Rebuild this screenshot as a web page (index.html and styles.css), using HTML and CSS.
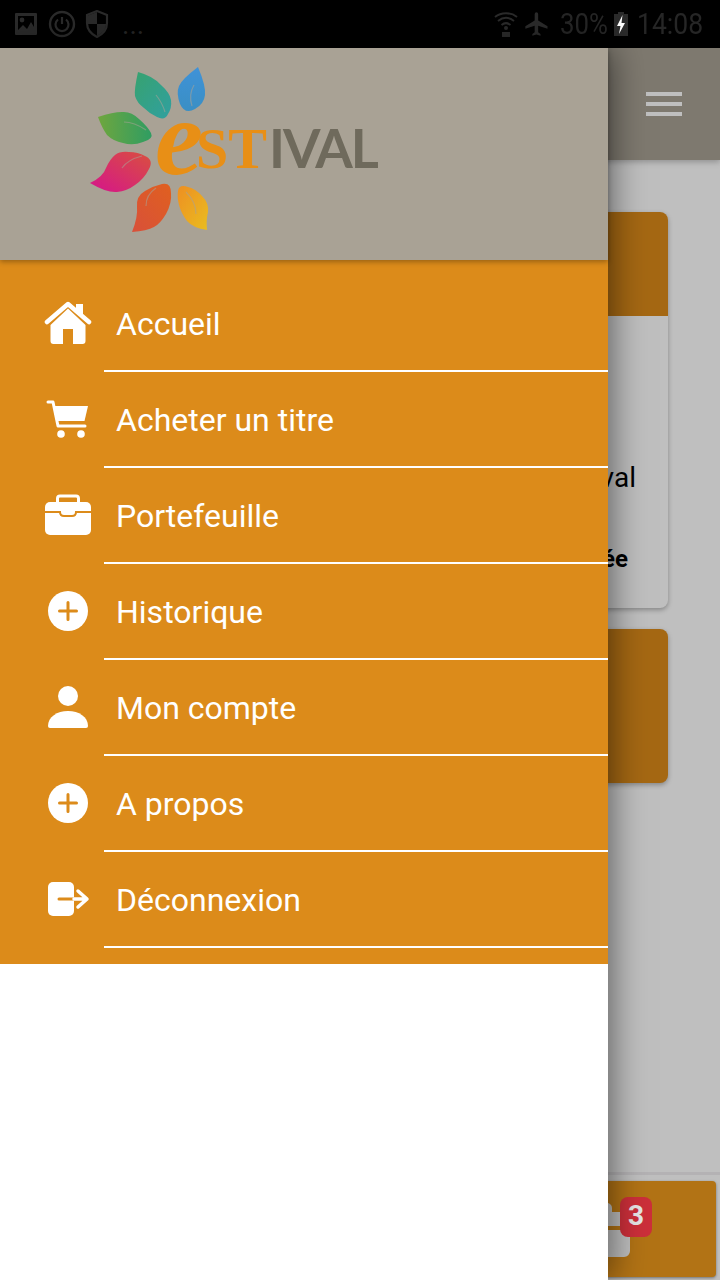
FILE: index.html
```html
<!DOCTYPE html>
<html lang="fr">
<head>
<meta charset="utf-8">
<title>Estival</title>
<link rel="stylesheet" href="styles.css">
</head>
<body>
<div class="screen">
  <header class="status">
    <div class="status-group">
      <svg class="st-icon" width="26" height="26" viewBox="0 0 26 26"><path d="M3 2h20a1 1 0 0 1 1 1v20a1 1 0 0 1-1 1H3a1 1 0 0 1-1-1V3a1 1 0 0 1 1-1zm2 3v14l5-5 4 4 4-7 3 5V5z" fill-rule="evenodd"/><circle cx="9" cy="9" r="2.4"/></svg>
      <svg class="st-icon" width="28" height="28" viewBox="0 0 28 28"><circle cx="14" cy="14" r="12" fill="none" stroke="#2b2b2b" stroke-width="2.4"/><path d="M10 9.5a6.5 6.5 0 1 0 8 0" fill="none" stroke="#2b2b2b" stroke-width="2.2"/><path d="M14 7v7" stroke="#2b2b2b" stroke-width="2.2"/></svg>
      <svg class="st-icon" width="24" height="28" viewBox="0 0 24 28"><path d="M12 1l10 4v8c0 7-4 11-10 14C6 24 2 20 2 13V5z" fill="none" stroke="#2b2b2b" stroke-width="2.2"/><path d="M12 2L3 5.500V14h9zM12 14v12c5-3 9-6 9-12z"/></svg>
      <span class="st-dots">...</span>
    </div>
    <div class="status-group status-right">
      <svg class="st-icon" width="24" height="28" viewBox="0 0 24 28"><g fill="none" stroke="#2b2b2b" stroke-width="2"><path d="M1 7c6-5 16-5 22 0"/><path d="M4 11c5-4 11-4 16 0"/><path d="M7.500 15c3-2.500 6-2.500 9 0"/></g><circle cx="12" cy="18" r="2"/><path d="M8 22h8v5H8z"/></svg>
      <svg class="st-icon st-plane" width="28" height="28" viewBox="0 0 24 24"><path d="M21 16v-2l-8-5V3.500a1.500 1.500 0 0 0-3 0V9l-8 5v2l8-2.500V19l-2 1.500V22l3.500-1 3.500 1v-1.500L13 19v-5.500z"/></svg>
      <span class="st-pct">30%</span>
      <svg class="st-batt" width="16" height="24" viewBox="0 0 16 24"><path d="M5 0h6v2h4v22H1V2h4z" fill="#2b2b2b"/><path d="M9.500 3L4 14h3.500L6 22l6-11H8.500z" fill="#fff"/></svg>
      <span class="st-time">14:08</span>
    </div>
  </header>

  <div class="main">
    <div class="appbar">
      <button class="burger" type="button" aria-label="Menu"><span></span><span></span><span></span></button>
    </div>
    <div class="content">
      <article class="card">
        <div class="card-head"></div>
        <div class="card-body">
          <p class="card-text">Bienvenue sur l'application Estival</p>
          <p class="card-status">Validée</p>
        </div>
      </article>
      <div class="card-second"></div>
    </div>
    <footer class="footer">
      <div class="cart-button">
        <div class="bag">
          <svg width="60" height="54" viewBox="0 0 60 54"><path d="M20 10V5a3 3 0 0 1 3-3h14a3 3 0 0 1 3 3v5" fill="none" stroke="#fff" stroke-width="4"/><path d="M6 9h48a6 6 0 0 1 6 6v8H0v-8a6 6 0 0 1 6-6zM0 27h60v21a6 6 0 0 1-6 6H6a6 6 0 0 1-6-6z" fill="#fff"/></svg>
          <span class="badge">3</span>
        </div>
      </div>
    </footer>
    <div class="scrim"></div>

    <nav class="drawer">
      <div class="drawer-head">
        <svg class="logo" width="300" height="180" viewBox="80 60 300 180">
          <defs>
            <linearGradient id="gTeal" x1="0" y1="0" x2="1" y2="1"><stop offset="0" stop-color="#37a26f"/><stop offset="1" stop-color="#30a0a0"/></linearGradient>
            <linearGradient id="gBlue" x1="0" y1="0" x2="0" y2="1"><stop offset="0" stop-color="#3f92d8"/><stop offset="1" stop-color="#3a8fc4"/></linearGradient>
            <linearGradient id="gGreen" x1="0" y1="0" x2="1" y2="0"><stop offset="0" stop-color="#6fa63e"/><stop offset="1" stop-color="#2f9d62"/></linearGradient>
            <linearGradient id="gPink" x1="0" y1="1" x2="1" y2="0"><stop offset="0" stop-color="#d5148c"/><stop offset="1" stop-color="#d9503e"/></linearGradient>
            <linearGradient id="gRed" x1="0" y1="1" x2="1" y2="0"><stop offset="0" stop-color="#d8503a"/><stop offset="1" stop-color="#e0601f"/></linearGradient>
            <linearGradient id="gYellow" x1="0" y1="0" x2="1" y2="1"><stop offset="0" stop-color="#ee8f22"/><stop offset="1" stop-color="#e9bd20"/></linearGradient>
          </defs>
          <g class="logo-art">
            <path d="M138 72Q153 76 161 85Q170 93 171 100Q172 108 168 114Q165 121 157 117Q150 114 144 108Q137 103 135 96Q134 90 138 72Z" fill="url(#gTeal)"/>
            <path d="M198 67Q206 86 205 95Q204 104 195 109Q185 115 180 104Q176 93 179 86Q182 79 198 67Z" fill="url(#gBlue)"/>
            <path d="M98 117Q113 112 122 112Q131 111 139 119Q148 127 151 133Q154 139 143 142Q133 146 123 143Q113 141 107 135Q102 128 98 117Z" fill="url(#gGreen)"/>
            <path d="M90 183Q103 177 106 168Q110 159 115 155Q120 151 129 152Q138 152 145 156Q154 160 149 169Q144 179 135 185Q127 191 117 192Q107 193 90 183Z" fill="url(#gPink)"/>
            <path d="M132 232Q138 217 137 207Q136 196 145 191Q153 186 162 184Q171 182 171 193Q172 203 166 214Q160 224 154 227Q147 231 132 232Z" fill="url(#gRed)"/>
            <path d="M207 230Q193 228 187 221Q181 213 179 205Q177 197 178 191Q179 184 188 187Q196 189 202 196Q209 203 208 212Q206 220 207 230Z" fill="url(#gYellow)"/>
            <g fill="none" stroke="#a9a295" stroke-width="1.200" opacity=".55">
              <path d="M156 95C160 100 163 105 165 112"/>
              <path d="M194 85C190 92 190 100 192 106"/>
              <path d="M124 122C132 122 140 126 146 130"/>
              <path d="M122 168C126 162 134 158 142 156"/>
              <path d="M146 206C146 198 150 192 156 188"/>
              <path d="M186 192C192 198 196 206 196 214"/>
            </g>
            <text class="logo-word" x="155" y="168"><tspan class="logo-e" dy="6">e</tspan><tspan class="logo-st" dx="-7" dy="-6">ST</tspan><tspan class="logo-ival" dx="2">IVAL</tspan></text>
          </g>
        </svg>
      </div>
      <ul class="menu">
        <li class="menu-item">
          <svg class="menu-icon" viewBox="0 0 48 48"><path class="wf" d="M6.500 26L24 9.500L41.500 26V42a3 3 0 0 1-3 3H29V30H19V45H9.500a3 3 0 0 1-3-3z"/><path class="wf" d="M32 5h7v11l-7-6z"/><path class="ws" d="M3 23L24 5L45 23"/></svg>
          <span class="menu-label">Accueil</span>
        </li>
        <li class="menu-item">
          <svg class="menu-icon" viewBox="0 0 48 48"><path class="ws thin" d="M4 7h5l5 24h27"/><path class="wf" d="M10 11H44L40.500 26H13z"/><circle class="wf" cx="17" cy="39" r="3.800"/><circle class="wf" cx="37" cy="39" r="3.800"/></svg>
          <span class="menu-label">Acheter un titre</span>
        </li>
        <li class="menu-item">
          <svg class="menu-icon" viewBox="0 0 48 48"><path class="ws thin" d="M13.500 11V7.500a2.500 2.500 0 0 1 2.500-2.500h16a2.500 2.500 0 0 1 2.500 2.500V11"/><rect class="wf" x="1" y="11" width="46" height="33" rx="5"/><path class="os band" d="M1 21H16c0 3 2 4 4 4h8c2 0 4-1 4-4H47"/></svg>
          <span class="menu-label">Portefeuille</span>
        </li>
        <li class="menu-item">
          <svg class="menu-icon" viewBox="0 0 48 48"><circle class="wf" cx="24" cy="24" r="20"/><path class="os" d="M15.500 24h17M24 15.500v17"/></svg>
          <span class="menu-label">Historique</span>
        </li>
        <li class="menu-item">
          <svg class="menu-icon" viewBox="0 0 48 48"><circle class="wf" cx="24" cy="13" r="10"/><path class="wf" d="M4 43C4 34 13 28 24 28S44 34 44 43Q44 45 42 45H6Q4 45 4 43Z"/></svg>
          <span class="menu-label">Mon compte</span>
        </li>
        <li class="menu-item">
          <svg class="menu-icon" viewBox="0 0 48 48"><circle class="wf" cx="24" cy="24" r="20"/><path class="os" d="M15.500 24h17M24 15.500v17"/></svg>
          <span class="menu-label">A propos</span>
        </li>
        <li class="menu-item">
          <svg class="menu-icon" viewBox="0 0 48 48"><rect class="wf" x="4" y="7" width="26" height="34" rx="5"/><path class="os" d="M15 24H30"/><path class="ws arrow" d="M30 24H42M34 16L43 24L34 32"/></svg>
          <span class="menu-label">Déconnexion</span>
        </li>
      </ul>
      <div class="drawer-rest"></div>
    </nav>
  </div>
</div>
</body>
</html>
```

FILE: styles.css
```css
* { box-sizing: border-box; }
html, body { margin: 0; padding: 0; }
body { font-family: Roboto, "Liberation Sans", sans-serif; background: #000; }

.screen { position: relative; width: 720px; height: 1280px; overflow: hidden; display: flex; flex-direction: column; background: #fff; }

/* status bar */
.status { flex: 0 0 48px; height: 48px; background: #000; display: flex; justify-content: space-between; align-items: center; padding: 0 17px 0 13px; color: #262626; }
.status-group { display: flex; align-items: center; gap: 9px; }
.status-right { gap: 5px; }
.st-icon { fill: #2b2b2b; display: block; }
.st-plane { margin: 0 4px 0 0; }
.st-dots { font-size: 28px; line-height: 28px; margin-top: 2px; margin-left: 4px; }
.st-pct, .st-time { font-size: 30px; line-height: 32px; display: inline-block; font-weight: 400; transform-origin: left center; }
.st-pct { width: 48px; transform: scaleX(.86); }
.st-time { width: 66px; margin-left: 3px; transform: scaleX(.885); white-space: nowrap; }
.st-batt { display: block; }

/* page underneath the drawer */
.main { position: relative; flex: 1; display: flex; flex-direction: column; min-height: 0; }
.appbar { flex: 0 0 112px; background: #a9a295; display: flex; justify-content: flex-end; align-items: center; padding-right: 38px; box-shadow: 0 2px 6px rgba(0,0,0,.25); position: relative; }
.burger { display: flex; flex-direction: column; gap: 6px; width: 36px; padding: 0; margin: 0; border: 0; background: none; }
.burger span { display: block; height: 4px; background: #fff; }

.content { flex: 1; background: #fff; padding: 52px 52px 0; display: flex; flex-direction: column; gap: 21px; }
.card { height: 396px; border-radius: 8px; background: #fff; box-shadow: 0 2px 5px rgba(0,0,0,.3); display: flex; flex-direction: column; overflow: hidden; }
.card-head { flex: 0 0 104px; background: #dc8b1a; }
.card-body { flex: 1; padding: 146px 32px 0 0; text-align: right; color: #000; }
.card-text { margin: 0; font-size: 28px; line-height: 32px; }
.card-status { margin: 50px 0 0; font-size: 24px; line-height: 30px; font-weight: 700; position: relative; left: -8px; }
.card-second { height: 154px; border-radius: 8px; background: #dc8b1a; box-shadow: 0 2px 5px rgba(0,0,0,.3); }

.footer { flex: 0 0 108px; background: #fff; border-top: 3px solid #f1eef1; padding: 6px 4px 3px; }
.cart-button { height: 96px; background: #ee9a1c; border-radius: 4px; box-shadow: 0 1px 3px rgba(0,0,0,.4); display: flex; justify-content: flex-end; padding: 22px 86px 0 0; }
.bag { position: relative; width: 60px; height: 54px; }
.bag svg { display: block; }
.badge { position: absolute; z-index: 1; left: 50px; top: -6px; width: 32px; height: 40px; border-radius: 8px; background: #cc2f3a; color: #e6e6e6; font-size: 28px; font-weight: 700; line-height: 38px; text-align: center; }

.scrim { position: absolute; inset: 0; background: rgba(0,0,0,.25); }

/* drawer */
.drawer { position: absolute; z-index: 2; left: 0; top: 0; bottom: 0; width: 608px; background: #fff; display: flex; flex-direction: column; box-shadow: 4px 0 32px rgba(0,0,0,.5); }
.drawer-head { flex: 0 0 212px; background: #a9a295; padding: 12px 0 0 80px; position: relative; z-index: 1; box-shadow: 0 2px 5px rgba(0,0,0,.3); }
.logo { display: block; overflow: visible; }
.logo-art { filter: blur(.7px); }
.logo-word { font-family: "Liberation Serif", serif; }
.logo-e { font-style: italic; font-weight: 700; font-size: 108px; fill: #e88f16; }
.logo-st { font-size: 58px; font-weight: 700; fill: #e88f16; }
.logo-ival { font-family: Lato, "Liberation Sans", sans-serif; font-size: 54px; font-weight: 700; letter-spacing: -2px; fill: #6f6a5c; }

.menu { list-style: none; margin: 0; padding: 16px 0; background: #dc8b1a; }
.menu-item { height: 96px; display: flex; align-items: center; position: relative; padding: 0 0 2px 44px; }
.menu-item::after { content: ""; position: absolute; left: 104px; right: 0; bottom: 0; height: 2px; background: #fff; }
.menu-icon { width: 48px; height: 48px; display: block; flex: none; }
.menu-label { margin: 2px 0 0 24px; font-size: 32px; line-height: 40px; color: #fff; }
.wf { fill: #fff; }
.ws { fill: none; stroke: #fff; stroke-width: 4.500; stroke-linecap: round; stroke-linejoin: round; }
.ws.thin { stroke-width: 3; }
.ws.arrow { stroke-width: 3.500; }
.os { fill: none; stroke: #dc8b1a; stroke-width: 3; stroke-linecap: round; }
.os.band { stroke-width: 2; }
.drawer-rest { flex: 1; background: #fff; }
```
